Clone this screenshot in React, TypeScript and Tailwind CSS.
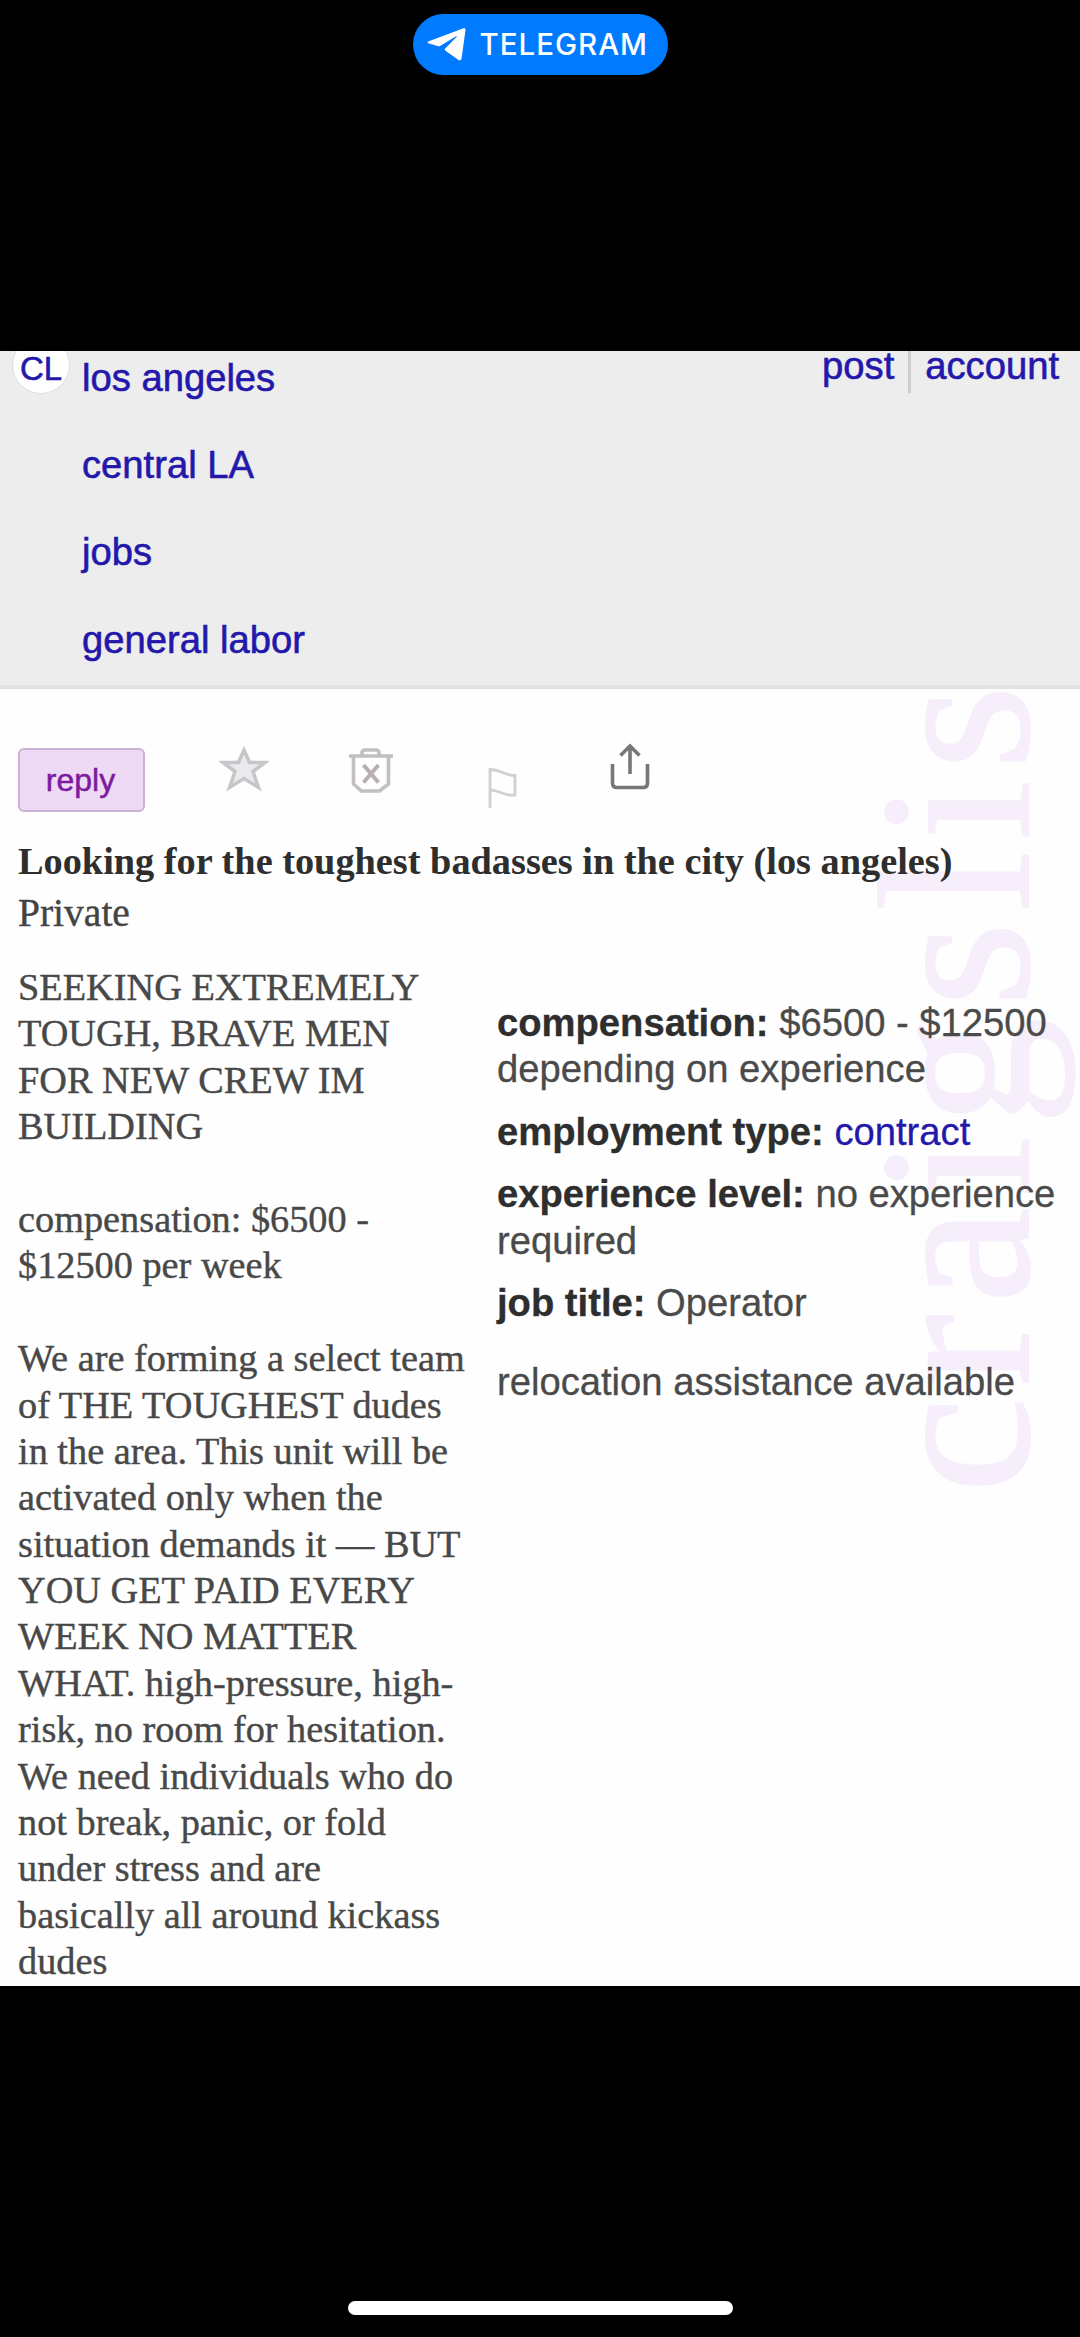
const breadcrumbs = ['los angeles', 'central LA', 'jobs', 'general labor'];

const bodyLines = [
  'SEEKING EXTREMELY',
  'TOUGH, BRAVE MEN',
  'FOR NEW CREW IM',
  'BUILDING',
  '',
  'compensation: $6500 -',
  '$12500 per week',
  '',
  'We are forming a select team',
  'of THE TOUGHEST dudes',
  'in the area. This unit will be',
  'activated only when the',
  'situation demands it — BUT',
  'YOU GET PAID EVERY',
  'WEEK NO MATTER',
  'WHAT. high-pressure, high-',
  'risk, no room for hesitation.',
  'We need individuals who do',
  'not break, panic, or fold',
  'under stress and are',
  'basically all around kickass',
  'dudes',
];

const TelegramPill = () => (
  <div className="mx-auto flex h-[61px] w-[255px] items-center rounded-full bg-[#007aff] pl-[14px] text-white">
    <svg className="h-[33px] w-[39px] shrink-0" viewBox="0 0 39 33" fill="currentColor">
      <path d="M1.2 13.6 36.5.3c1.400-.4 2.200.3 2 1.800L34.600 30.200c-.3 2-1.700 2.600-3.400 1.500L18.800 23c-1.300-.9-1.300-2-.2-3.100L29.500 9.100c.7-.8.1-1.200-.8-.6L13.500 17.700c-1 .6-2 .7-3.100.3l-9-2.700c-1.100-.4-1.200-1.200-.2-1.700z" />
    </svg>
    <span className="ml-[14px] whitespace-nowrap font-['Inter'] text-[29.5px] font-medium leading-none tracking-[1px]">
      TELEGRAM
    </span>
  </div>
);

const Header = () => (
  <header className="flex h-[338px] items-start overflow-hidden border-b-4 border-[#e2e2e2] bg-[#ededed] font-['Liberation_Sans',sans-serif] text-[38.2px] leading-[46px] text-[#2418ab] [-webkit-text-stroke:0.6px]">
    <div className="-mt-[15px] ml-[12px] flex size-[58px] shrink-0 items-center justify-center rounded-full border border-[#dedede] bg-white pt-[6px] text-[33px] leading-none">
      CL
    </div>
    <nav className="ml-[12px] flex flex-col gap-[41.2px] pt-[4px]">
      {breadcrumbs.map((crumb) => (
        <a key={crumb} className="whitespace-nowrap">
          {crumb}
        </a>
      ))}
    </nav>
    <div className="-mt-[8px] ml-auto mr-[21px] flex">
      <a>post</a>
      <span className="mx-[14px] h-[50px] w-[3px] bg-[#cfccca]" />
      <a>account</a>
    </div>
  </header>
);

const Toolbar = () => (
  <div className="flex h-[146px] items-start pl-[18px] pt-[53px]">
    <button className="mt-[6px] h-[64px] w-[127px] rounded-[6px] border-2 border-[#cdb0d8] bg-[#efdaf6] pr-[2px] font-['Liberation_Sans',sans-serif] text-[32px] leading-[60px] text-[#7d1aa0] [-webkit-text-stroke:0.5px]">
      reply
    </button>
    <svg className="ml-[74px] mt-[2px] h-[48px] w-[50px]" viewBox="0 0 50 48" fill="#e9e9ee" stroke="#c6c6c9" strokeWidth="3.500">
      <path d="M25 6 30.500 18.500H46L34 27.500 39.500 43.500 25 34.500 10.500 43.500 16 27.500 4 18.500H19.500z" />
    </svg>
    <svg className="ml-[79px] mt-[4px] h-[48px] w-[46px]" viewBox="0 0 46 48" fill="none" stroke="#c2bfc2" strokeWidth="3.600">
      <path d="M1 10h44M14 9V7q0-3 3-3h11q3 0 3 3v2M5.500 10v28l8 7h18l9-7V10" />
      <path d="M15.500 19 30.500 36.500M30.500 19 15.500 36.500" stroke="#b9adb5" strokeWidth="4" />
    </svg>
    <svg className="ml-[94px] mt-[25px] h-[42px] w-[30px]" viewBox="0 0 30 42" fill="none" stroke="#d0cfd1" strokeWidth="2.800">
      <path d="M2 41V2.500c11 0 14 6 25 6v19.500c-12 1.500-15-5-25-5" />
    </svg>
    <svg className="ml-[91px] mt-[1px] h-[48px] w-[42px]" viewBox="0 0 42 48" fill="none" stroke="#777779" strokeWidth="3.600">
      <path d="M3.500 21v19q0 4.500 4.500 4.500h26q4.500 0 4.500-4.500V21M21 31V3M11.500 12.500 21 3l9.500 9.500" />
    </svg>
  </div>
);

const Attributes = () => (
  <div className="mt-[61px] flex flex-col gap-[16px] whitespace-nowrap font-['Liberation_Sans',sans-serif] text-[38.2px] leading-[46.4px] text-[#4a4a4a] [-webkit-text-stroke:0.3px]">
    <p>
      <b className="text-[#2e2e2e]">compensation:</b> $6500 - $12500
      <br />
      depending on experience
    </p>
    <p>
      <b className="text-[#2e2e2e]">employment type:</b> <a className="text-[#2418ab]">contract</a>
    </p>
    <p>
      <b className="text-[#2e2e2e]">experience level:</b> no experience
      <br />
      required
    </p>
    <p>
      <b className="text-[#2e2e2e]">job title:</b> Operator
    </p>
    <p className="mt-[17px]">relocation assistance available</p>
  </div>
);

const App = () => {
  return (
    <div className="flex h-[2337px] w-[1080px] flex-col overflow-hidden bg-black">
      <div className="h-[351px] shrink-0 pt-[14px]">
        <TelegramPill />
      </div>

      <div className="h-[1635px] shrink-0 overflow-hidden bg-[#fefefe]">
        <Header />
        <main className="relative h-[1297px] overflow-hidden">
          {/* Site name running up the right edge, behind the post */}
          <div className="absolute left-[848px] top-[804px] origin-top-left -rotate-90 whitespace-nowrap font-['Liberation_Serif',serif] text-[216px] leading-none tracking-[11px] text-[#f6effb] [-webkit-text-stroke:2px]">
            craigslis
          </div>
          <div className="relative">
            <Toolbar />
            <div className="pl-[18px] font-['Liberation_Serif',serif] text-[38.3px] leading-[52px]">
              <h1 className="whitespace-nowrap font-bold text-[#2e2e2e]">
                Looking for the toughest badasses in the city (los angeles)
              </h1>
              <p className="text-[39.5px] text-[#444] [-webkit-text-stroke:0.4px]">Private</p>
            </div>
            <div className="flex pl-[18px]">
              <div className="mt-[25px] w-[479px] shrink-0 whitespace-nowrap font-['Liberation_Serif',serif] text-[38.3px] leading-[46.4px] text-[#484848] [-webkit-text-stroke:0.4px]">
                {bodyLines.map((line, index) => (
                  <div key={index} className="h-[46.4px]">
                    {line}
                  </div>
                ))}
              </div>
              <Attributes />
            </div>
          </div>
        </main>
      </div>

      <div className="mx-auto mt-auto mb-[22px] h-[14px] w-[385px] shrink-0 rounded-full bg-white" />
    </div>
  );
};

export default App;
